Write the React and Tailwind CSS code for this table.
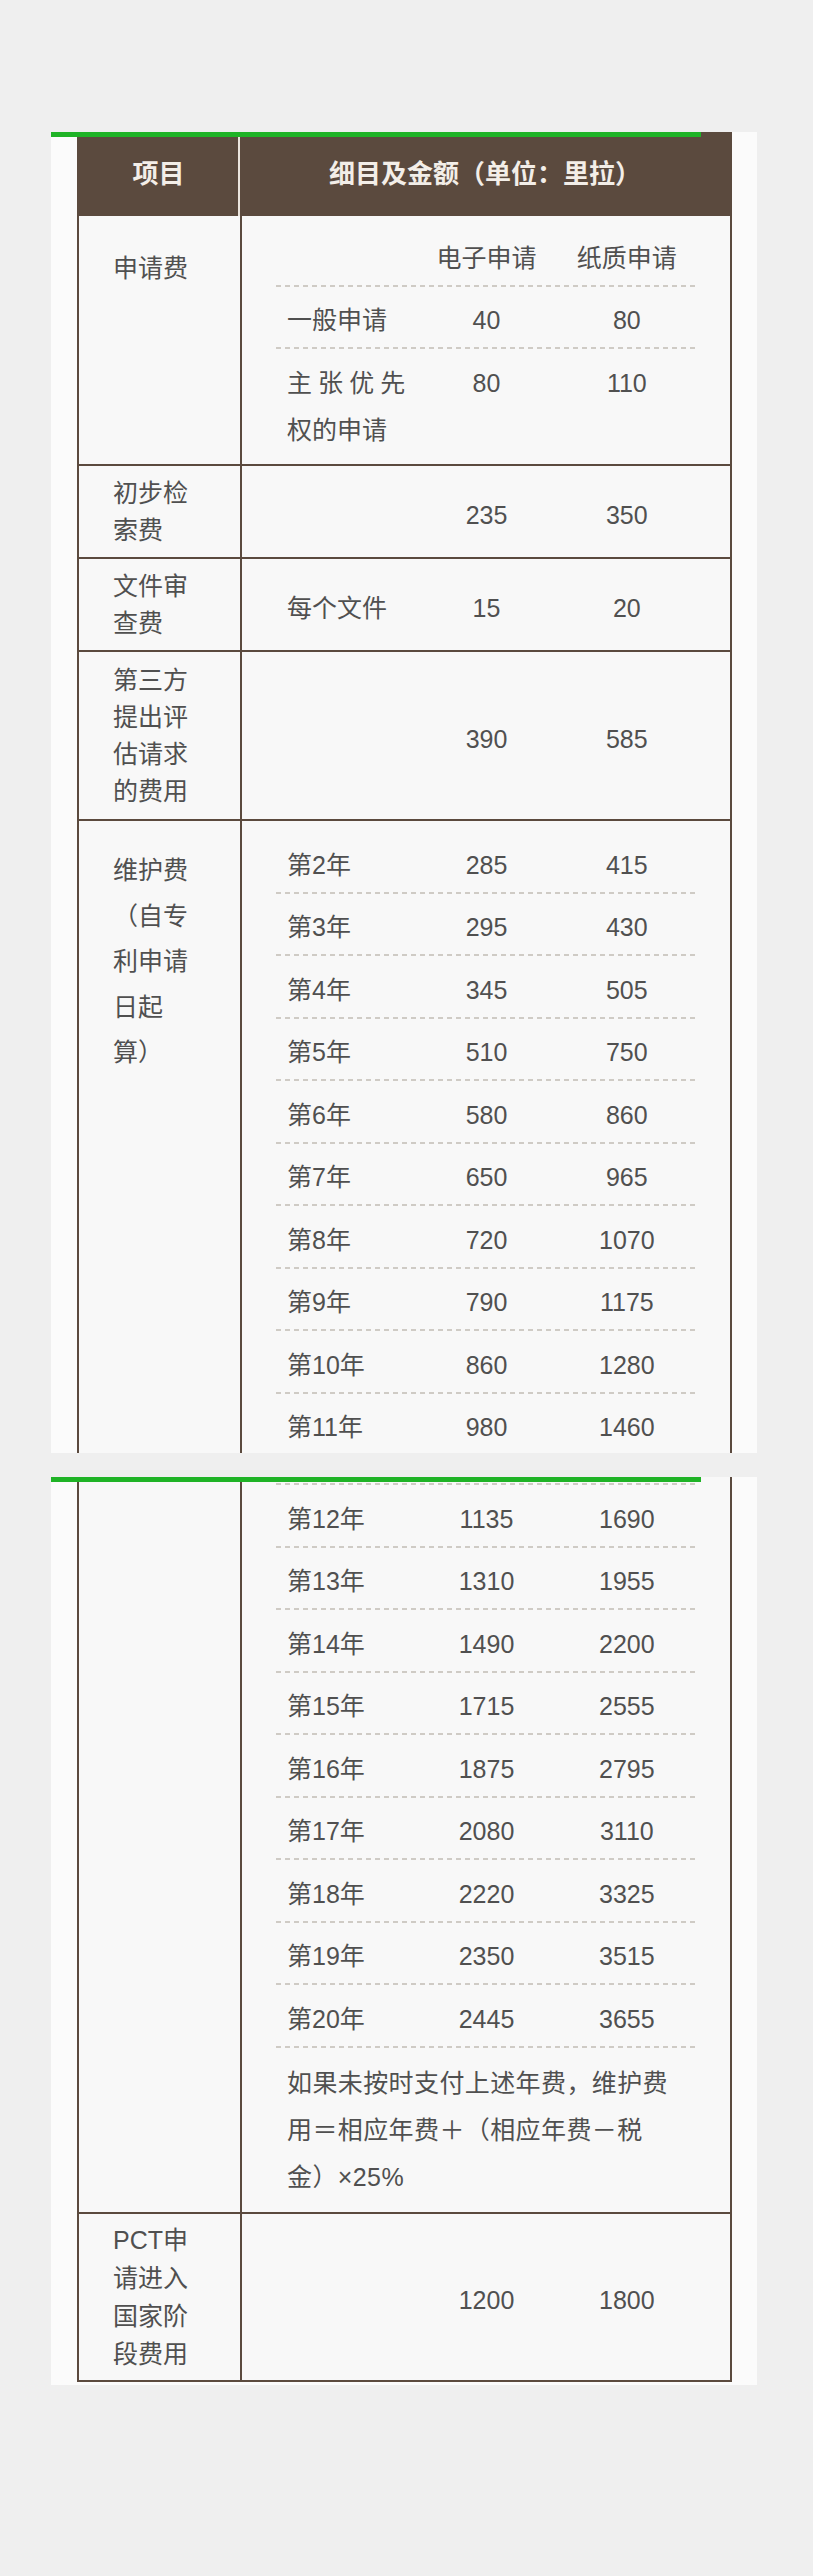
import React from "react";

const years1 = [
  ["第2年", "285", "415"],
  ["第3年", "295", "430"],
  ["第4年", "345", "505"],
  ["第5年", "510", "750"],
  ["第6年", "580", "860"],
  ["第7年", "650", "965"],
  ["第8年", "720", "1070"],
  ["第9年", "790", "1175"],
  ["第10年", "860", "1280"],
  ["第11年", "980", "1460"],
];

const years2 = [
  ["第12年", "1135", "1690"],
  ["第13年", "1310", "1955"],
  ["第14年", "1490", "2200"],
  ["第15年", "1715", "2555"],
  ["第16年", "1875", "2795"],
  ["第17年", "2080", "3110"],
  ["第18年", "2220", "3325"],
  ["第19年", "2350", "3515"],
  ["第20年", "2445", "3655"],
];

function Dash() {
  return <div className="h-[2px] bg-[linear-gradient(to_right,#cfcbc5_55%,transparent_55%)] bg-[length:9px_2px]" />;
}

function Line({ label, a, b, justify }) {
  return (
    <div className="grid grid-cols-3 pt-[10.5px] pb-[3px] leading-[47px]">
      <div className={justify ? "px-[11px] text-justify" : "px-[11px]"}>{label}</div>
      <div className="text-center">{a}</div>
      <div className="text-center">{b}</div>
    </div>
  );
}

function Row({ left, leftClass = "", rightClass = "", children, noBottom }) {
  return (
    <div className={noBottom ? "flex" : "flex border-b-2 border-[#5b4a3e]"}>
      <div className={"w-[163px] shrink-0 border-r-2 border-[#5b4a3e] pl-[34px] " + leftClass}>{left}</div>
      <div className={"flex min-w-0 flex-1 flex-col pl-[34px] pr-[33px] " + rightClass}>{children}</div>
    </div>
  );
}

function Years({ list, firstDash }) {
  return list.map(([label, a, b], i) => (
    <React.Fragment key={label}>
      {(i > 0 || firstDash) && <Dash />}
      <Line label={label} a={a} b={b} />
    </React.Fragment>
  ));
}

export default function App() {
  return (
    <div className="min-h-screen bg-[#efefef] pt-[132px] pb-[192px] font-['Liberation_Sans','Noto_Sans_CJK_SC',sans-serif] text-[25px] text-[#505050]">
      {/* first shot */}
      <div className="relative ml-[51px] h-[1321px] w-[706px] overflow-hidden bg-[#fbfbfb]">
        <div className="absolute left-0 top-0 z-10 h-[5px] w-[650px] bg-[#1fb326]" />
        <div className="ml-[26px] w-[655px] border-x-2 border-[#5b4a3e] bg-[#f8f8f8]">
          <div className="flex h-[84px] bg-[#5b4a3e] text-[26px] font-bold text-[#f3eee8]">
            <div className="flex w-[161px] shrink-0 items-center justify-center border-r-2 border-[#ebe5de]">项目</div>
            <div className="flex flex-1 items-center justify-center">细目及金额（单位：里拉）</div>
          </div>

          <Row left="申请费" leftClass="pt-[29px] leading-[46px]" rightClass="pt-[8px] pb-[7.5px]">
            <Line label="" a="电子申请" b="纸质申请" />
            <Dash />
            <Line label="一般申请" a="40" b="80" />
            <Dash />
            <Line label="主张优先权的申请" a="80" b="110" justify />
          </Row>

          <Row
            left={<>初步检<br />索费</>}
            leftClass="flex flex-col justify-center py-[8.5px] leading-[37px]"
            rightClass="justify-center"
          >
            <Line label="" a="235" b="350" />
          </Row>

          <Row
            left={<>文件审<br />查费</>}
            leftClass="flex flex-col justify-center py-[8.5px] leading-[37px]"
            rightClass="justify-center"
          >
            <Line label="每个文件" a="15" b="20" />
          </Row>

          <Row
            left={<>第三方<br />提出评<br />估请求<br />的费用</>}
            leftClass="flex flex-col justify-center py-[9.5px] leading-[37px]"
            rightClass="justify-center"
          >
            <Line label="" a="390" b="585" />
          </Row>

          <Row
            left={<>维护费<br />（自专<br />利申请<br />日起<br />算）</>}
            leftClass="pt-[27px] leading-[45.5px]"
            rightClass="pt-[10px] pb-[20px]"
            noBottom
          >
            <Years list={years1} />
          </Row>
        </div>
      </div>

      {/* second shot */}
      <div className="relative ml-[51px] mt-[24px] w-[706px] bg-[#fbfbfb] pb-[3px]">
        <div className="absolute left-0 top-0 z-10 h-[5px] w-[650px] bg-[#1fb326]" />
        <div className="ml-[26px] w-[655px] border-x-2 border-[#5b4a3e] bg-[#f8f8f8]">
          <Row left="" rightClass="pt-[6px] pb-[8px]">
            <Years list={years2} firstDash />
            <Dash />
            <div className="px-[11px] pt-[12px] pb-[3px] leading-[47px] tracking-[0.4px]">
              如果未按时支付上述年费，维护费<br />
              用＝相应年费＋（相应年费－税<br />
              金）×25%
            </div>
          </Row>

          <Row
            left={<>PCT申<br />请进入<br />国家阶<br />段费用</>}
            leftClass="flex flex-col justify-center py-[7px] leading-[38px]"
            rightClass="justify-center"
          >
            <Line label="" a="1200" b="1800" />
          </Row>
        </div>
      </div>
    </div>
  );
}
